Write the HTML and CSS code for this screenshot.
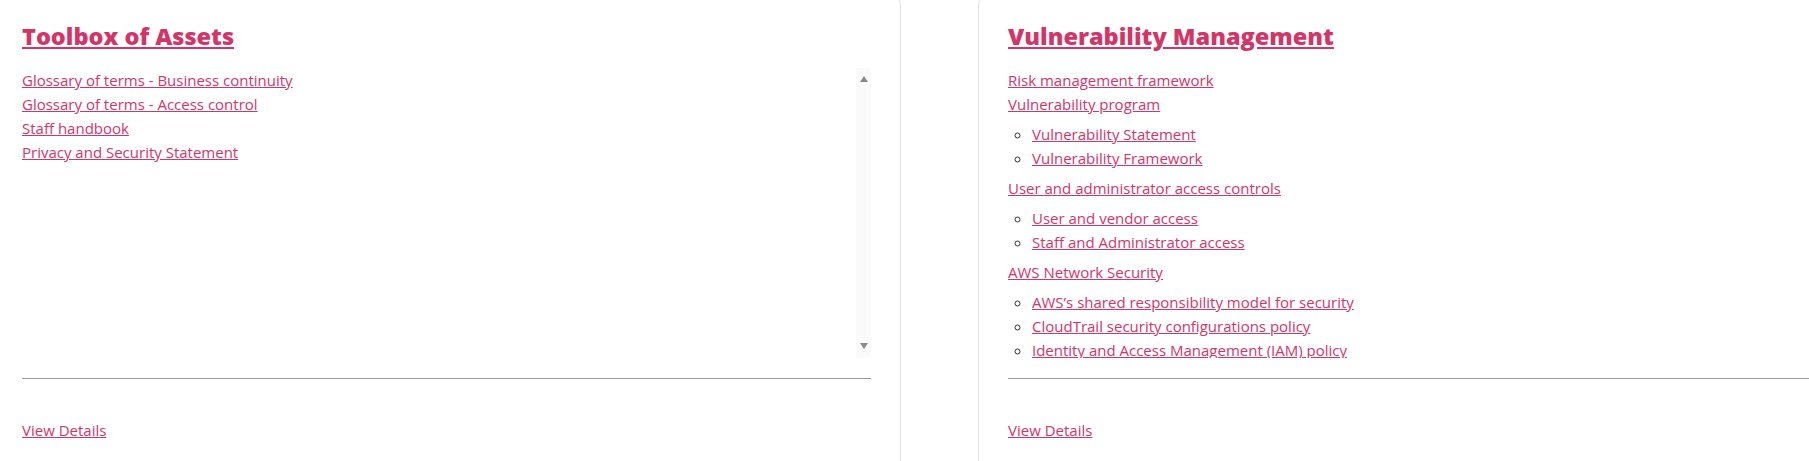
FILE: index.html
```html
<!DOCTYPE html>
<html lang="en">
<head>
  <meta charset="UTF-8">
  <title>Policies</title>
  <link rel="stylesheet" href="styles.css">
</head>
<body>
  <div class="cards">
    <div class="card">
      <h2><a href="#">Toolbox of Assets</a></h2>
      <div class="links">
        <ul class="top">
          <li><a href="#">Glossary of terms - Business continuity</a></li>
          <li><a href="#">Glossary of terms - Access control</a></li>
          <li><a href="#">Staff handbook</a></li>
          <li><a href="#">Privacy and Security Statement</a></li>
        </ul>
        <div class="rail">
          <span class="arrow up"></span>
          <span class="arrow down"></span>
        </div>
      </div>
      <hr>
      <a class="details" href="#">View Details</a>
    </div>

    <div class="card">
      <h2><a href="#">Vulnerability Management</a></h2>
      <div class="links">
        <ul class="top">
          <li><a href="#">Risk management framework</a></li>
          <li>
            <a href="#">Vulnerability program</a>
            <ul class="sub">
              <li><a href="#">Vulnerability Statement</a></li>
              <li><a href="#">Vulnerability Framework</a></li>
            </ul>
          </li>
          <li>
            <a href="#">User and administrator access controls</a>
            <ul class="sub">
              <li><a href="#">User and vendor access</a></li>
              <li><a href="#">Staff and Administrator access</a></li>
            </ul>
          </li>
          <li>
            <a href="#">AWS Network Security</a>
            <ul class="sub">
              <li><a href="#">AWS’s shared responsibility model for security</a></li>
              <li><a href="#">CloudTrail security configurations policy</a></li>
              <li><a href="#">Identity and Access Management (IAM) policy</a></li>
            </ul>
          </li>
        </ul>
        <div class="rail">
          <span class="arrow up"></span>
          <span class="arrow down"></span>
        </div>
      </div>
      <hr>
      <a class="details" href="#">View Details</a>
    </div>
  </div>
</body>
</html>
```

FILE: styles.css
```css
body {
  margin: 0;
  font-family: "Open Sans", "Liberation Sans", sans-serif;
  font-size: 15px;
  line-height: 24px;
  color: #333;
  background: #fff;
  overflow: hidden;
}

a {
  color: #d23669;
}

.cards {
  display: grid;
  grid-template-columns: 909px 909px;
  gap: 77px;
  margin: -5px 0 0 -8px;
}

.card {
  border: 1px solid #e2e2e2;
  border-radius: 10px;
  padding: 24px 29px 30px;
}

.card h2 {
  margin: 0 0 16px;
  font-size: 23.5px;
  font-weight: 800;
  line-height: 32px;
}

.links {
  display: flex;
  height: 290px;
}

.top {
  flex: 1;
  list-style: none;
  margin: 0;
  padding: 0;
  overflow: hidden;
}

/* scroll track beside the list */
.rail {
  width: 15px;
  background: #fafafa;
  display: flex;
  flex-direction: column;
  justify-content: space-between;
  align-items: center;
  padding: 8px 0 9px;
  box-sizing: border-box;
}

.arrow {
  width: 0;
  height: 0;
  border-left: 4.5px solid transparent;
  border-right: 4.5px solid transparent;
}

.arrow.up {
  border-bottom: 6px solid #8a8a8a;
}

.arrow.down {
  border-top: 6px solid #8a8a8a;
}

.sub {
  list-style: circle;
  margin: 6px 0;
  padding-left: 24px;
}

hr {
  margin: 20px 0 39px;
  border: 0;
  border-top: 1px solid #999;
}

.details {
  display: inline-block;
}
```
